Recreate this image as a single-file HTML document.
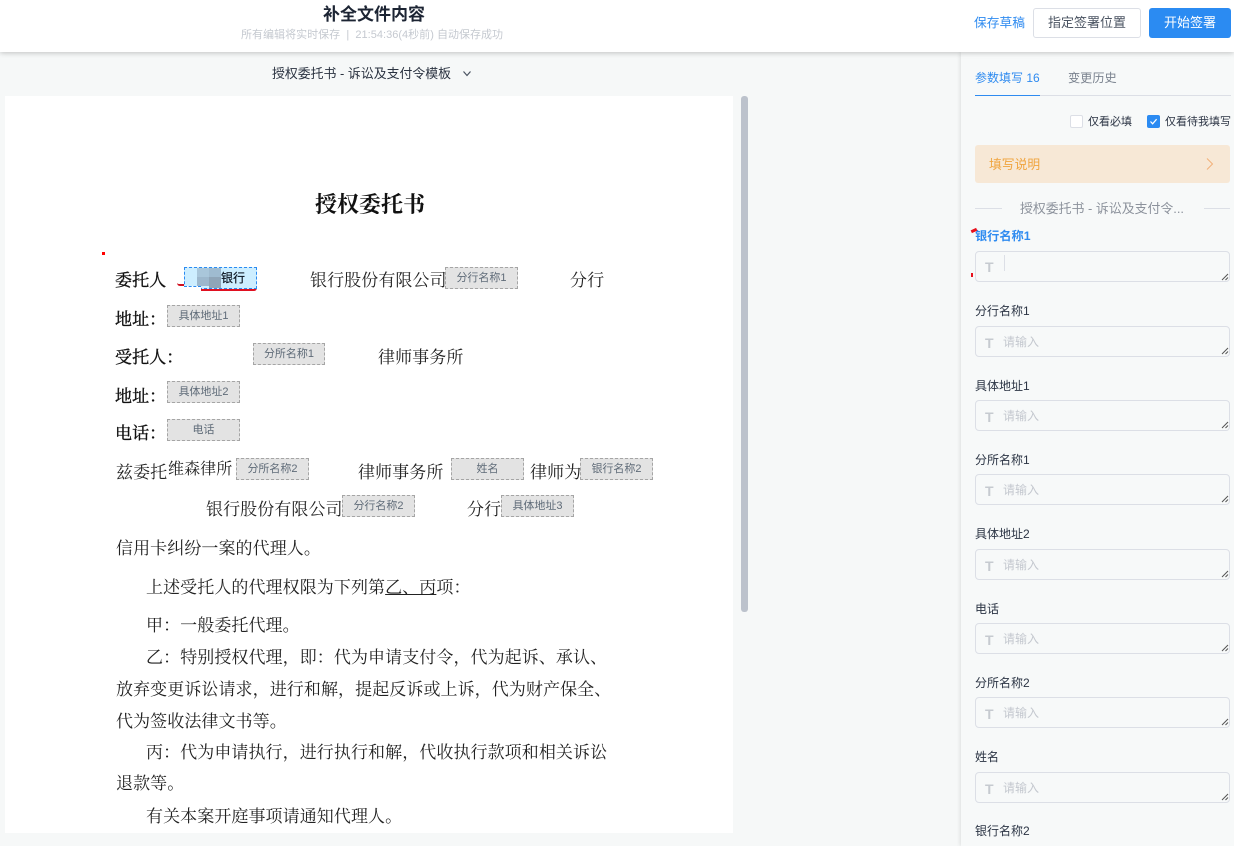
<!DOCTYPE html>
<html lang="zh"><head><meta charset="utf-8"><style>
*{box-sizing:border-box}
html,body{margin:0;padding:0}
body{width:1234px;height:846px;overflow:hidden;position:relative;background:#f6f8f8;font-family:"Liberation Sans","Noto Sans CJK SC",sans-serif;color:#1f2a3a}
.a{position:absolute;white-space:nowrap}
#top{left:0;top:0;width:1234px;height:52px;background:#fff;box-shadow:0 1px 5px rgba(0,0,0,.22);z-index:3}
#side{left:961px;top:52px;width:273px;height:794px;background:#f7f9f9;box-shadow:-1px 0 4px rgba(0,0,0,.1)}
#doc{left:5px;top:96px;width:728px;height:737px;background:#fff}
.t{font-family:"Liberation Serif","Noto Serif CJK SC",serif;font-size:17px;line-height:24px;color:#222;letter-spacing:.08px}
.b{color:#111;-webkit-text-stroke:.35px #111}
.p{background:#e3e3e3;border:1px dashed #a5a5a5;width:73px;height:22px;font-size:11px;line-height:20px;text-align:center;color:#5f6b78}
.l{left:975px;font-size:12px;line-height:16px;color:#2b3444}
.i{left:975px;width:255px;height:31px;border:1px solid #dcdfe6;border-radius:4px;background:#f7f9f9}
.ph{left:1003px;font-size:12px;line-height:16px;color:#c4c8cf}
.T{left:985px;font-size:14px;line-height:16px;font-weight:700;color:#c6cad0;font-family:"Liberation Sans",sans-serif}
.g{width:8px;height:8px}
</style></head><body>
<div class="a" id="top"></div>
<div class="a" id="side"></div>
<div class="a" id="doc"></div>
<div style="z-index:5;position:absolute;left:0;top:0;width:1234px;height:52px">
<div class="a" style="left:274px;width:200px;text-align:center;top:4px;font-size:17px;line-height:22px;font-weight:700;color:#1c2433">补全文件内容</div>
<div class="a" style="left:241px;top:28px;font-size:11px;line-height:15px;color:#c5c9d0;letter-spacing:.02px">所有编辑将实时保存&nbsp;&nbsp;|&nbsp;&nbsp;21:54:36(4秒前) 自动保存成功</div>
<div class="a" style="left:974px;top:15px;font-size:12.75px;line-height:16px;color:#2f8bf0">保存草稿</div>
<div class="a" style="left:1033px;top:8px;width:108px;height:30px;border:1px solid #dcdfe6;border-radius:3px;background:#fff;text-align:center;font-size:13px;line-height:28px;color:#4a5361">指定签署位置</div>
<div class="a" style="left:1149px;top:8px;width:82px;height:30px;border-radius:3px;background:#2b8bf2;text-align:center;font-size:13px;line-height:30px;color:#fff">开始签署</div>
</div>
<div class="a" style="left:272px;top:66px;font-size:12.9px;line-height:16px;color:#2a3240">授权委托书 - 诉讼及支付令模板</div>
<svg class="a" style="left:462px;top:70px" width="10" height="8" viewBox="0 0 10 8"><path d="M1.5 1.5L5 5.5L8.5 1.5" fill="none" stroke="#4a5361" stroke-width="1.2"/></svg>
<div class="a" style="left:741px;top:96px;width:7px;height:516px;background:#bcc2cc;border-radius:3px"></div>

<!-- document -->
<div class="a t b" style="left:315px;top:191px;font-size:22px;line-height:28px;font-weight:700;color:#111;letter-spacing:0;-webkit-text-stroke:0">授权委托书</div>
<div class="a" style="left:102px;top:252px;width:3px;height:3px;background:#f00"></div>
<div class="a t b" style="left:115px;top:269px">委托人</div>
<div class="a" style="left:177px;top:283px;width:11px;height:3px;border-bottom:2px solid #d01020;border-radius:0 0 6px 6px"></div>
<div class="a" style="left:201px;top:288px;width:56px;height:3px;border-bottom:2px solid #e01020;border-radius:0 0 6px 0"></div>
<div class="a" style="left:184px;top:267px;width:73px;height:22px;background:#cdeeff;border:1px dashed #2b8bf2;font-size:12px;line-height:20px;color:#0d1622;padding-left:36px;-webkit-text-stroke:.2px #0d1622">银行</div>
<div class="a" style="left:184px;top:286px;width:17px;height:4px;background:#fff;border-top:1px dashed #2b8bf2"></div>
<div class="a" style="left:197px;top:268px;width:12px;height:9px;background:#a9c6da"></div>
<div class="a" style="left:209px;top:268px;width:12px;height:9px;background:#9fbbd0"></div>
<div class="a" style="left:197px;top:277px;width:12px;height:9px;background:#9db8cd"></div>
<div class="a" style="left:209px;top:277px;width:12px;height:11px;background:#8fa5b8"></div>
<div class="a t" style="left:310px;top:269px">银行股份有限公司</div>
<div class="a p" style="left:445px;top:267px">分行名称1</div>
<div class="a t" style="left:570px;top:269px">分行</div>
<div class="a t b" style="left:115px;top:308px">地址：</div>
<div class="a p" style="left:167px;top:305px">具体地址1</div>
<div class="a t b" style="left:115px;top:346px">受托人：</div>
<div class="a p" style="left:253px;top:343px;width:72px">分所名称1</div>
<div class="a t" style="left:378px;top:346px">律师事务所</div>
<div class="a t b" style="left:115px;top:385px">地址：</div>
<div class="a p" style="left:167px;top:381px">具体地址2</div>
<div class="a t b" style="left:115px;top:422px">电话：</div>
<div class="a p" style="left:167px;top:419px">电话</div>
<div class="a t" style="left:116px;top:461px">兹委托</div>
<div class="a t" style="left:168px;top:458px;font-size:16px">维森律所</div>
<div class="a p" style="left:236px;top:458px">分所名称2</div>
<div class="a t" style="left:358px;top:461px">律师事务所</div>
<div class="a p" style="left:451px;top:458px">姓名</div>
<div class="a t" style="left:530px;top:461px">律师为</div>
<div class="a p" style="left:580px;top:458px">银行名称2</div>
<div class="a t" style="left:206px;top:498px">银行股份有限公司</div>
<div class="a p" style="left:342px;top:495px">分行名称2</div>
<div class="a t" style="left:467px;top:498px">分行</div>
<div class="a p" style="left:501px;top:495px">具体地址3</div>
<div class="a t" style="left:116px;top:537px">信用卡纠纷一案的代理人。</div>
<div class="a t" style="left:146px;top:576px">上述受托人的代理权限为下列第<span style="text-decoration:underline">乙、丙</span>项：</div>
<div class="a t" style="left:146px;top:614px">甲：一般委托代理。</div>
<div class="a t" style="left:146px;top:646px">乙：特别授权代理，即：代为申请支付令，代为起诉、承认、</div>
<div class="a t" style="left:116px;top:678px">放弃变更诉讼请求，进行和解，提起反诉或上诉，代为财产保全、</div>
<div class="a t" style="left:116px;top:710px">代为签收法律文书等。</div>
<div class="a t" style="left:146px;top:741px">丙：代为申请执行，进行执行和解，代收执行款项和相关诉讼</div>
<div class="a t" style="left:116px;top:772px">退款等。</div>
<div class="a t" style="left:146px;top:805px">有关本案开庭事项请通知代理人。</div>

<!-- side panel -->
<div class="a" style="left:975px;top:70px;font-size:12px;line-height:16px;color:#2f8bf0">参数填写 16</div>
<div class="a" style="left:1068px;top:70px;font-size:12.2px;line-height:16px;color:#7b838f">变更历史</div>
<div class="a" style="left:975px;top:95px;width:256px;height:1px;background:#dcdfe6"></div>
<div class="a" style="left:975px;top:95px;width:65px;height:1px;background:#2f8bf0"></div>
<div class="a" style="left:1070px;top:115px;width:13px;height:13px;border:1px solid #dcdfe6;border-radius:2px;background:#fff"></div>
<div class="a" style="left:1088px;top:115px;font-size:11px;line-height:15px;color:#2b3444">仅看必填</div>
<div class="a" style="left:1147px;top:115px;width:13px;height:13px;border-radius:2px;background:#2b8bf2"></div>
<svg class="a" style="left:1147px;top:115px" width="13" height="13" viewBox="0 0 13 13"><path d="M3.5 6.5L5.6 8.8L9.6 4.2" fill="none" stroke="#fff" stroke-width="1.2"/></svg>
<div class="a" style="left:1165px;top:115px;font-size:11px;line-height:15px;color:#2b3444">仅看待我填写</div>
<div class="a" style="left:975px;top:145px;width:255px;height:38px;background:#f7e8d6;border-radius:3px"></div>
<div class="a" style="left:989px;top:157px;font-size:12.8px;line-height:16px;color:#f0a43e">填写说明</div>
<svg class="a" style="left:1205px;top:157px" width="10" height="14" viewBox="0 0 10 14"><path d="M2 1.5L7.5 7L2 12.5" fill="none" stroke="#f2b078" stroke-width="1"/></svg>
<div class="a" style="left:975px;top:208px;width:27px;height:1px;background:#dcdfe6"></div>
<div class="a" style="left:1204px;top:208px;width:26px;height:1px;background:#dcdfe6"></div>
<div class="a" style="left:1020px;top:201px;font-size:12.9px;line-height:16px;color:#8c929c">授权委托书 - 诉讼及支付令...</div>

<div class="a l" style="top:228px;color:#2f8bf0;font-weight:700;font-size:12.2px">银行名称1</div>
<div class="a" style="left:971px;top:229px;width:6px;height:3px;background:#e8101c;transform:rotate(-25deg)"></div>
<div class="a" style="left:971px;top:273px;width:2px;height:4px;background:#e8101c"></div>
<div class="a i" style="top:251px"></div><div class="a T" style="top:259px">T</div>
<div class="a" style="left:1004px;top:255px;width:1px;height:16px;background:#dcdfe6"></div>

<div class="a l" style="top:303px">分行名称1</div><div class="a i" style="top:326px"></div><div class="a T" style="top:335px">T</div><div class="a ph" style="top:334px">请输入</div>
<div class="a l" style="top:378px">具体地址1</div><div class="a i" style="top:400px"></div><div class="a T" style="top:409px">T</div><div class="a ph" style="top:408px">请输入</div>
<div class="a l" style="top:452px">分所名称1</div><div class="a i" style="top:474px"></div><div class="a T" style="top:483px">T</div><div class="a ph" style="top:482px">请输入</div>
<div class="a l" style="top:526px">具体地址2</div><div class="a i" style="top:549px"></div><div class="a T" style="top:558px">T</div><div class="a ph" style="top:557px">请输入</div>
<div class="a l" style="top:601px">电话</div><div class="a i" style="top:623px"></div><div class="a T" style="top:632px">T</div><div class="a ph" style="top:631px">请输入</div>
<div class="a l" style="top:675px">分所名称2</div><div class="a i" style="top:697px"></div><div class="a T" style="top:706px">T</div><div class="a ph" style="top:705px">请输入</div>
<div class="a l" style="top:749px">姓名</div><div class="a i" style="top:772px"></div><div class="a T" style="top:781px">T</div><div class="a ph" style="top:780px">请输入</div>
<div class="a l" style="top:823px">银行名称2</div>

<svg class="a g" style="left:1221px;top:273px" viewBox="0 0 8 8"><path d="M1 7L7 1M4.5 7L7 4.5" stroke="#555" stroke-width="1"/></svg>
<svg class="a g" style="left:1221px;top:347px" viewBox="0 0 8 8"><path d="M1 7L7 1M4.5 7L7 4.5" stroke="#555" stroke-width="1"/></svg>
<svg class="a g" style="left:1221px;top:421px" viewBox="0 0 8 8"><path d="M1 7L7 1M4.5 7L7 4.5" stroke="#555" stroke-width="1"/></svg>
<svg class="a g" style="left:1221px;top:495px" viewBox="0 0 8 8"><path d="M1 7L7 1M4.5 7L7 4.5" stroke="#555" stroke-width="1"/></svg>
<svg class="a g" style="left:1221px;top:570px" viewBox="0 0 8 8"><path d="M1 7L7 1M4.5 7L7 4.5" stroke="#555" stroke-width="1"/></svg>
<svg class="a g" style="left:1221px;top:644px" viewBox="0 0 8 8"><path d="M1 7L7 1M4.5 7L7 4.5" stroke="#555" stroke-width="1"/></svg>
<svg class="a g" style="left:1221px;top:718px" viewBox="0 0 8 8"><path d="M1 7L7 1M4.5 7L7 4.5" stroke="#555" stroke-width="1"/></svg>
<svg class="a g" style="left:1221px;top:793px" viewBox="0 0 8 8"><path d="M1 7L7 1M4.5 7L7 4.5" stroke="#555" stroke-width="1"/></svg>
</body></html>
